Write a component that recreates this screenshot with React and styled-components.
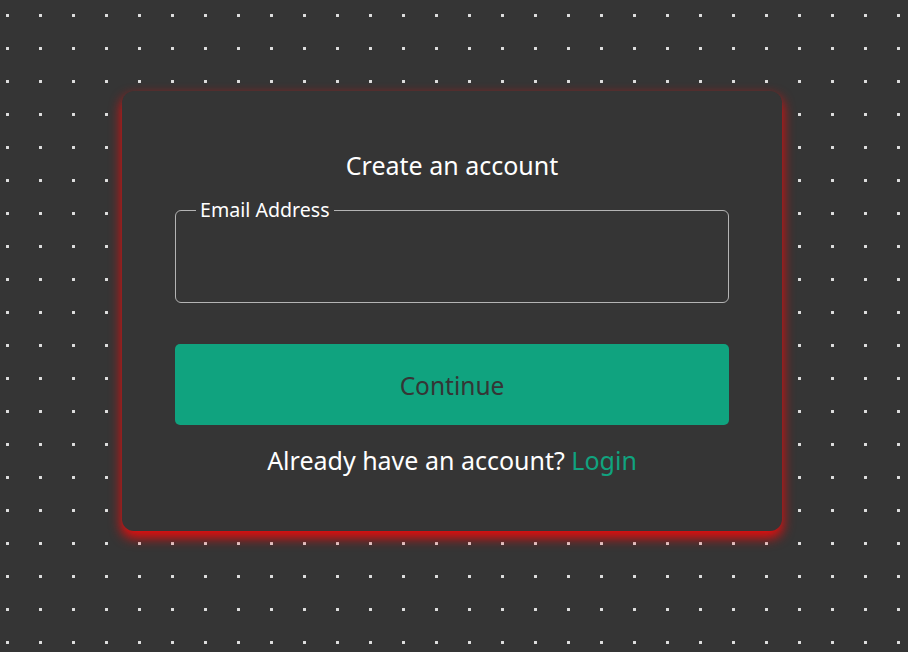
import React from "react";
import styled, { createGlobalStyle } from "styled-components";

const GlobalStyle = createGlobalStyle`
  html, body {
    margin: 0;
    padding: 0;
    background: #353535;
  }
  body {
    font-family: "Noto Sans", "Open Sans", sans-serif;
  }
`;

const Page = styled.div`
  width: 908px;
  height: 652px;
  overflow: hidden;
  background-color: #353535;
  background-image: radial-gradient(circle, #dedede 1.4px, transparent 1.9px);
  background-size: 33px 33px;
  background-position: -9px -1px;
  padding-top: 91px;
  box-sizing: border-box;
`;

const Card = styled.div`
  width: 660px;
  height: 440px;
  margin-left: 122px;
  box-sizing: border-box;
  padding: 58px 53px 0;
  background: #353535;
  border-radius: 12px;
  box-shadow: 0 6px 12px 1px rgb(228, 14, 14);
  display: flex;
  flex-direction: column;
`;

const Title = styled.h2`
  margin: 0 0 16px;
  font-size: 25px;
  line-height: 32px;
  font-weight: 400;
  color: #ffffff;
  text-align: center;
`;

const Field = styled.fieldset`
  margin: 0;
  padding: 0 16px;
  height: 106px;
  box-sizing: border-box;
  border: 1px solid #b4b4b4;
  border-radius: 6px;
`;

const Legend = styled.legend`
  margin-left: 4px;
  padding: 0 4px;
  font-size: 19.6px;
  line-height: 26px;
  color: #ffffff;
`;

const Input = styled.input`
  width: 100%;
  height: 60px;
  border: none;
  outline: none;
  background: transparent;
  color: #fff;
  font: inherit;
  font-size: 20px;
`;

const Button = styled.button`
  margin-top: 41px;
  height: 81px;
  padding-top: 2px;
  border: none;
  border-radius: 5px;
  background: #10a37f;
  color: #353535;
  font-family: inherit;
  font-size: 24.5px;
  cursor: pointer;
`;

const Footer = styled.p`
  margin: 19px 0 0;
  font-size: 25px;
  line-height: 32px;
  color: #ffffff;
  text-align: center;
`;

const LoginLink = styled.a`
  color: #10a37f;
  text-decoration: none;
`;

export default function App() {
  return (
    <>
      <GlobalStyle />
      <Page>
        <Card>
          <Title>Create an account</Title>
          <Field>
            <Legend>Email Address</Legend>
            <Input type="email" />
          </Field>
          <Button type="button">Continue</Button>
          <Footer>
            Already have an account? <LoginLink href="#">Login</LoginLink>
          </Footer>
        </Card>
      </Page>
    </>
  );
}
